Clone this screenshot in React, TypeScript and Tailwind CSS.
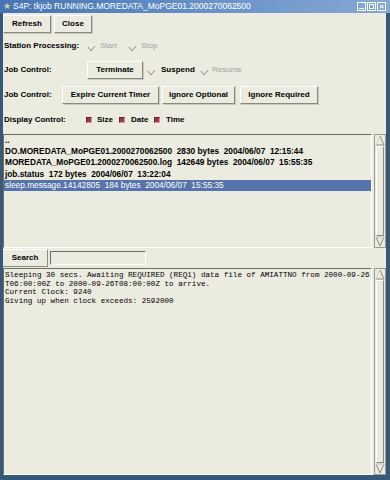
import React from "react";

const F = "font-['Liberation_Sans',Arial,sans-serif]";

function Btn({ children, w, className = "" }: { children: React.ReactNode; w: string; className?: string }) {
  return (
    <div
      className={`${w} h-[18px] flex items-center justify-center bg-[#ecebe0] border border-t-white border-l-white border-r-[#8a8a80] border-b-[#8a8a80] shadow-[1px_1px_0_#c8c7bb] text-[8px] font-bold text-black ${className}`}
    >
      {children}
    </div>
  );
}

function Check() {
  return (
    <svg width="9" height="7" viewBox="0 0 9 7" className="mt-[5px]">
      <polyline points="1,2 4,6 8,1" fill="none" stroke="#8c8c8c" strokeWidth="1" />
    </svg>
  );
}

function RedBox() {
  return <div className="w-[6px] h-[6px] bg-[#a2344c] border border-t-[#6e2030] border-l-[#6e2030] border-r-[#c9a0a8] border-b-[#c9a0a8]" />;
}

function Scrollbar() {
  return (
    <div className="w-[12px] h-full flex flex-col border border-[#9a9a8e] bg-[#ecebe0]">
      <svg width="10" height="11" viewBox="0 0 10 11" className="shrink-0">
        <polygon points="5,1 9,10 1,10" fill="#ecebe0" stroke="#8a8a80" strokeWidth="1" />
        <line x1="5" y1="1" x2="1" y2="10" stroke="#ffffff" strokeWidth="0.8" />
      </svg>
      <div className="flex-1 border border-t-white border-l-white border-r-[#8a8a80] border-b-[#8a8a80] mx-[1px]" />
      <svg width="10" height="11" viewBox="0 0 10 11" className="shrink-0">
        <polygon points="1,1 9,1 5,10" fill="#ecebe0" stroke="#8a8a80" strokeWidth="1" />
        <line x1="1" y1="1" x2="9" y2="1" stroke="#ffffff" strokeWidth="0.8" />
      </svg>
    </div>
  );
}

export default function App() {
  const files = [
    "..",
    "DO.MOREDATA_MoPGE01.2000270062500  2830 bytes  2004/06/07  12:15:44",
    "MOREDATA_MoPGE01.2000270062500.log  142649 bytes  2004/06/07  15:55:35",
    "job.status  172 bytes  2004/06/07  13:22:04",
    "sleep.message.14142805  184 bytes  2004/06/07  15:55:35",
  ];
  const log = [
    "Sleeping 30 secs. Awaiting REQUIRED (REQ1) data file of AMIATTNO from 2000-09-26",
    "T06:00:00Z to 2000-09-26T08:00:00Z to arrive.",
    "Current Clock: 9240",
    "Giving up when clock exceeds: 2592000",
  ];
  return (
    <div className={`w-[390px] h-[480px] flex flex-col bg-[#ecebe0] overflow-hidden ${F}`}>
      {/* title bar */}
      <div className="h-[13px] shrink-0 flex items-center bg-gradient-to-r from-[#4574b2] via-[#6690c6] to-[#86a9d6] text-white">
        <span className="w-[13px] text-center text-[9px] leading-none text-[#d9cf9a]">★</span>
        <span className="text-[8.5px] leading-none">S4P: tkjob RUNNING.MOREDATA_MoPGE01.2000270062500</span>
        <div className="ml-auto mr-[4px] flex gap-[1px]">
          <div className="w-[9px] h-[9px] border border-white flex items-end justify-center pb-[1px]">
            <div className="w-[5px] h-[1px] bg-white" />
          </div>
          <div className="w-[9px] h-[9px] border border-white flex items-center justify-center">
            <div className="w-[5px] h-[5px] border border-white" />
          </div>
          <div className="w-[9px] h-[9px] border border-white flex items-center justify-center text-[8px] leading-none font-bold">
            ×
          </div>
        </div>
      </div>
      <div className="flex-1 flex flex-col border-l-[3px] border-r-[4px] border-b-[5px] border-[#345a78]">
        {/* row A */}
        <div className="h-[21px] shrink-0 flex items-center gap-[3px] pl-0">
          <Btn w="w-[48px]">Refresh</Btn>
          <Btn w="w-[38px]">Close</Btn>
        </div>
        {/* row B */}
        <div className="h-[23px] shrink-0 flex items-center text-[8px] font-bold pl-[1px]">
          <span className="w-[83px]">Station Processing:</span>
          <Check />
          <span className="ml-[4px] w-[28px] text-[#a0a0a0] font-normal">Start</span>
          <Check />
          <span className="ml-[4px] text-[#a0a0a0] font-normal">Stop</span>
        </div>
        {/* row C */}
        <div className="h-[26px] shrink-0 flex items-center text-[8px] font-bold pl-[1px]">
          <span className="w-[83px]">Job Control:</span>
          <Btn w="w-[56px]">Terminate</Btn>
          <span className="w-[4px]" />
          <Check />
          <span className="ml-[5px] w-[39px]">Suspend</span>
          <Check />
          <span className="ml-[3px] text-[#a0a0a0] font-normal">Resume</span>
        </div>
        {/* row D */}
        <div className="h-[24px] shrink-0 flex items-center text-[8px] font-bold pl-[1px]">
          <span className="w-[58px]">Job Control:</span>
          <Btn w="w-[97px]">Expire Current Timer</Btn>
          <Btn w="w-[73px]" className="ml-[3px]">Ignore Optional</Btn>
          <Btn w="w-[78px]" className="ml-[5px]">Ignore Required</Btn>
        </div>
        {/* row E */}
        <div className="h-[25px] shrink-0 flex items-center text-[8px] font-bold pl-[1px]">
          <span className="w-[82px]">Display Control:</span>
          <RedBox />
          <span className="ml-[5px] w-[22px]">Size</span>
          <RedBox />
          <span className="ml-[6px] w-[23px]">Date</span>
          <RedBox />
          <span className="ml-[6px]">Time</span>
        </div>
        {/* list */}
        <div className="mt-[2px] h-[114px] shrink-0 flex">
          <div className="flex-1 border border-t-[#6e6e66] border-l-[#6e6e66] border-r-white border-b-white pt-[0px] text-[8.3px] font-bold leading-[11.2px] mr-[2px]">
            {files.map((f, i) => (
              <div
                key={i}
                className={`whitespace-pre pl-[1px] ${i === files.length - 1 ? "bg-[#5674ab] text-white font-normal" : "text-black"}`}
              >
                {f}
              </div>
            ))}
          </div>
          <Scrollbar />
        </div>
        {/* search */}
        <div className="h-[19px] shrink-0 flex items-center">
          <div className="w-[45px] h-[18px] flex items-center justify-center text-[8px] font-bold border-t border-t-white border-r border-r-[#8a8a80] border-b border-b-[#8a8a80]">
            Search
          </div>
          <div className="ml-[2px] w-[96px] h-[14px] border border-t-[#6e6e66] border-l-[#6e6e66] border-r-white border-b-white bg-[#ecebe0]" />
        </div>
        {/* text area */}
        <div className="flex-1 flex mt-[1px]">
          <div className="flex-1 border border-t-[#6e6e66] border-l-[#6e6e66] border-r-white border-b-white pt-[2px] pl-[1px] font-['Liberation_Mono',monospace] text-[7.6px] leading-[8.6px] text-black mr-[2px]">
            {log.map((l, i) => (
              <div key={i} className="whitespace-pre">
                {l}
              </div>
            ))}
          </div>
          <Scrollbar />
        </div>
      </div>
    </div>
  );
}
